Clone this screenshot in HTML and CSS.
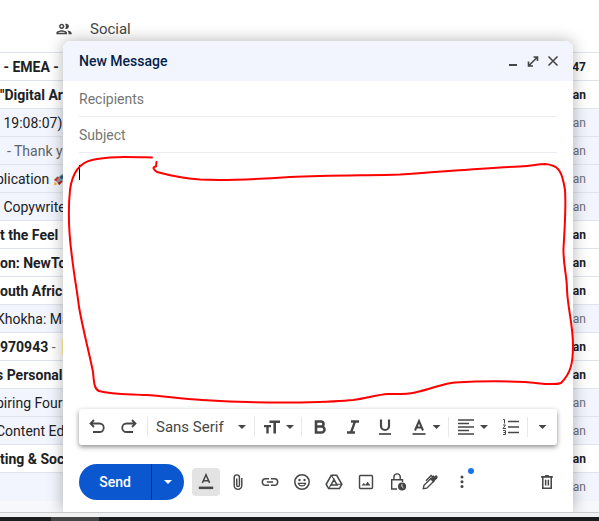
FILE: index.html
```html
<!DOCTYPE html>
<html lang="en">
<head>
<meta charset="utf-8">
<title>New Message</title>
<link rel="stylesheet" href="styles.css">
</head>
<body>
<main class="inbox">
  <div class="tabs">
    <a class="tab" href="#social">
      <svg class="tab-icon" viewBox="1.500 4.500 21 15"><path d="M9 13.750c-2.340 0-7 1.170-7 3.500V19h14v-1.750c0-2.330-4.660-3.500-7-3.500zM4.340 17c.84-.58 2.870-1.250 4.660-1.250s3.820.67 4.660 1.250H4.340zM9 12c1.930 0 3.500-1.570 3.500-3.500S10.930 5 9 5 5.500 6.570 5.500 8.500 7.070 12 9 12zm0-5c.83 0 1.500.67 1.500 1.500S9.830 10 9 10s-1.500-.67-1.500-1.500S8.170 7 9 7zm7.040 6.810c1.160.84 1.960 1.960 1.960 3.440V19h4v-1.750c0-2.020-3.500-3.170-5.960-3.440zM15 12c1.930 0 3.500-1.570 3.500-3.500S16.930 5 15 5c-.54 0-1.040.13-1.500.35.63.89 1 1.980 1 3.150s-.37 2.260-1 3.150c.46.22.96.35 1.500.35z"/></svg>
      <span>Social</span>
    </a>
  </div>
  <table class="mail">
    <tbody>
      <tr class="unread"><td><div class="subject"> - EMEA -</div></td><td class="date">47</td></tr>
      <tr class="unread"><td><div class="subject">"Digital Ar</div></td><td class="date">an</td></tr>
      <tr><td><div class="subject"> 19:08:07)</div></td><td class="date">an</td></tr>
      <tr><td><div class="subject"><span class="snippet">  - Thank y</span></div></td><td class="date">an</td></tr>
      <tr><td><div class="subject clipped">plication <svg class="rocket" viewBox="0 0 16 16"><path d="M1 9 5 5l3 1-4 5z" fill="#d33a2f"/><path d="m7 15 4-4-1-3-5 4z" fill="#b3261e"/><path d="M4 11C6 5 9 2 15 1c-1 6-4 9-10 11z" fill="#8a9ba5"/><circle cx="10" cy="6" r="2" fill="#2d5f7c"/><path d="m1 15 1-4 3 3z" fill="#f4a62a"/></svg></div></td><td class="date">an</td></tr>
      <tr><td><div class="subject"> Copywrite</div></td><td class="date">an</td></tr>
      <tr class="unread"><td><div class="subject">t the Feel</div></td><td class="date">an</td></tr>
      <tr class="unread"><td><div class="subject">on: NewTo</div></td><td class="date">an</td></tr>
      <tr class="unread"><td><div class="subject">outh Afric</div></td><td class="date">an</td></tr>
      <tr><td><div class="subject clipped">Khokha: Ma</div></td><td class="date">an</td></tr>
      <tr class="unread"><td><div class="subject">970943 <span class="snippet">-</span><mark></mark></div></td><td class="date">an</td></tr>
      <tr class="unread"><td><div class="subject clipped">s Personal</div></td><td class="date">an</td></tr>
      <tr><td><div class="subject clipped">piring Four</div></td><td class="date">an</td></tr>
      <tr><td><div class="subject clipped">Content Ed</div></td><td class="date">an</td></tr>
      <tr class="unread"><td><div class="subject">ting &amp; Soc</div></td><td class="date">an</td></tr>
      <tr><td><div class="subject"></div></td><td class="date">an</td></tr>
    </tbody>
  </table>
</main>
<footer class="taskbar"><span class="task"></span></footer>

<form class="compose">
  <header class="compose-head">
    <h1>New Message</h1>
    <button type="button" class="head-btn" aria-label="Minimize"><svg viewBox="0 0 14 14"><path d="M3 11h8"/></svg></button>
    <button type="button" class="head-btn" aria-label="Full screen"><svg viewBox="0 0 14 14"><path d="M7.500 3H11.500v4M11 3.500 3 11.500M2.500 7.500v4.500H7" stroke-width="1.600"/></svg></button>
    <button type="button" class="head-btn" aria-label="Close"><svg viewBox="0 0 14 14"><path d="m2.500 2.500 9 9M11.500 2.500l-9 9" stroke-width="1.600"/></svg></button>
  </header>
  <div class="compose-main">
    <input class="field" type="text" aria-label="Recipients" placeholder="Recipients">
    <input class="field" type="text" aria-label="Subject" placeholder="Subject">
    <div class="editor" role="textbox" aria-label="Message body" contenteditable="true"><span class="caret"></span></div>
    <div class="format">
      <button type="button" class="tool" aria-label="Undo"><svg viewBox="0 0 20 20"><path d="M7 3 3.500 6.500 7 10M4 6.500h8.500a3.700 3.700 0 0 1 0 8.500H6" stroke-width="1.800"/></svg></button>
      <button type="button" class="tool" aria-label="Redo"><svg viewBox="0 0 20 20"><path d="m13 3 3.500 3.500L13 10M16 6.500H7.500a3.700 3.700 0 0 0 0 8.500H14" stroke-width="1.800"/></svg></button>
      <button type="button" class="tool font line">Sans Serif<i class="arrow"></i></button>
      <button type="button" class="tool size line" aria-label="Size"><svg viewBox="0 0 20 20"><path class="solid" d="M7.500 3.500H18V6h-4v10.500h-2.600V6H7.500zM2 8h7v2.300H6.700v6.200H4.300v-6.200H2z"/></svg><i class="arrow"></i></button>
      <button type="button" class="tool bold line" aria-label="Bold"><svg viewBox="0 0 20 20"><path d="M6 4.500h5a2.500 2.500 0 0 1 0 5H6zm0 5h5.500a3 3 0 0 1 0 6H6z" stroke-width="2.600"/></svg></button>
      <button type="button" class="tool" aria-label="Italic"><svg viewBox="0 0 20 20"><path d="M8 4.500h8M4 15.500h8M12 4.500l-4 11" stroke-width="2.300"/></svg></button>
      <button type="button" class="tool" aria-label="Underline"><svg viewBox="0 0 20 20"><path d="M6 2.500v6.500a4 4 0 0 0 8 0V2.500" stroke-width="2.200"/><path d="M4 17h12" stroke-width="1.700"/></svg></button>
      <button type="button" class="tool size" aria-label="Text color"><svg viewBox="0 0 20 20"><path d="M6 13.500 10 4l4 9.500M7.500 10.500h5"/><path d="M3.500 17h13" stroke-width="1.700"/></svg><i class="arrow"></i></button>
      <button type="button" class="tool size line" aria-label="Align"><svg viewBox="0 0 20 20"><path d="M2 3h16M2 6.500h11M2 10h16M2 13.500h11M2 17h16" stroke-width="1.500"/></svg><i class="arrow"></i></button>
      <button type="button" class="tool" aria-label="Numbered list"><svg viewBox="0 0 20 20"><path d="M7 4.500h11M7 10h11M7 15.500h11" stroke-width="1.500"/><path d="M2 2.500h1.500v4M2 8h2.500L2 11.500h3M2 13.500h2.500v4H2M2.500 15.500h2" stroke-width="1"/></svg></button>
      <button type="button" class="tool more line" aria-label="More formatting"><i class="arrow"></i></button>
    </div>
    <div class="actions">
      <div class="send">
        <button type="submit" class="send-main">Send</button>
        <button type="button" class="send-more" aria-label="More send options"><i class="arrow"></i></button>
      </div>
      <button type="button" class="act active" aria-label="Formatting options"><svg viewBox="0 0 20 20"><path d="M6 11 10 2l4 9M7.300 8.500h5.400" stroke-width="1.700"/><path d="M2 16.500h16" stroke-width="2.800"/></svg></button>
      <button type="button" class="act" aria-label="Attach files"><svg viewBox="0 0 20 20"><path d="M14.200 5.500V14a4.200 4.200 0 0 1-8.400 0V5a2.900 2.900 0 0 1 5.800 0v8.500a1.500 1.500 0 0 1-3 0V6" stroke-width="1.600"/></svg></button>
      <button type="button" class="act" aria-label="Insert link"><svg viewBox="0 0 20 20"><path d="M9 6.300H5.200a3.700 3.700 0 0 0 0 7.400H9M11 6.300h3.800a3.700 3.700 0 0 1 0 7.400H11M6.500 10h7" stroke-width="1.700"/></svg></button>
      <button type="button" class="act" aria-label="Insert emoji"><svg viewBox="0 0 20 20"><circle cx="10" cy="10" r="8" stroke-width="1.700"/><circle class="solid" cx="7.200" cy="7.800" r="1.300"/><circle class="solid" cx="12.800" cy="7.800" r="1.300"/><path d="M6 11.500a4.200 4.200 0 0 0 8 0z" stroke-width="1.400"/></svg></button>
      <button type="button" class="act" aria-label="Insert from Drive"><svg viewBox="0 0 20 20"><path d="M7 2.500h6l5.700 10L16 17.300H4L1.300 12.500zM10 7.300l-3.400 6h6.800z" stroke-width="1.700"/><path d="M7 2.500l3 4.800M4 17.300l2.600-4M18.700 12.500h-5.300" stroke-width="1.200"/></svg></button>
      <button type="button" class="act" aria-label="Insert photo"><svg viewBox="0 0 20 20"><rect x="2.800" y="2.800" width="14.400" height="14.400" rx="1" stroke-width="1.600"/><path class="solid" d="m5 14 2.500-3 1.800 2 2.400-3.200 3.300 4.200z"/></svg></button>
      <button type="button" class="act" aria-label="Confidential mode"><svg viewBox="0 0 20 20"><path d="M9 17.800H3V7.500h12V10M5.500 7V4.500a3.500 3.500 0 0 1 7 0V7" stroke-width="1.600"/><circle class="solid" cx="14.500" cy="15" r="4.500"/><path d="M14.300 12.500V15l1.700 1.500" stroke="#fff" stroke-width="1"/></svg></button>
      <button type="button" class="act" aria-label="Insert signature"><svg viewBox="0 0 20 20"><path d="m2.500 17.500.8-3.800L11 6l3.200 3.200-7.800 7.600z" stroke-width="1.500"/><path class="solid" d="m10 6.500 4-4 1.300 1.300 1.300-1.500q2.400.8 1.900 3.200L13.500 10.500z"/><path d="M5.500 8.500 11.300 2.700l2 1.800" stroke-width="1.500"/></svg></button>
      <button type="button" class="act menu" aria-label="More options"><svg viewBox="0 0 20 20"><circle class="solid" cx="10" cy="4.500" r="1.700"/><circle class="solid" cx="10" cy="9.700" r="1.700"/><circle class="solid" cx="10" cy="15" r="1.700"/></svg><span class="dot"></span></button>
      <button type="button" class="act discard" aria-label="Discard draft"><svg viewBox="0 0 20 20"><path d="M3.500 4.300h13M8 3.200h4M5.300 5v12h9.400V5M8.500 7.500v6.500M11.500 7.500v6.500" stroke-width="1.700"/></svg></button>
    </div>
  </div>
</form>

<svg class="markup" viewBox="0 0 599 521" width="599" height="521" aria-hidden="true"><path d="M152 157.500C130 157 108 156 92 160C78 163 72 175 70 190C68 210 69 235 72 257C74 275 77 290 79 307C83 330 89 352 93 372C94 382 94 389 99 391C113 395 130 394 146 395C165 396 180 399 202 400C235 402 265 403 300 402.500C320 402 340 401.500 353 400C367 398 378 394.500 388 394C398 394 406 394.500 415 392.500C432 389 442 383.500 455 382.500C480 381 505 381 525 382C540 383 553 386 561 383C571 373 573 363 573 345C573 325 568 310 567 290C567 275 563 265 563.500 248C565 225 566 205 565 190C562 170 558 165 545 164C538 164 532 166 520 166.500C480 168 440 172 400 174.500C370 175.500 330 175 290 177C260 179 230 181 200 179.500C180 178 168 175 157 172C152 168 153 167 156 166.500L156.500 162"/></svg>
</body>
</html>
```
FILE: styles.css
```css
* { box-sizing: border-box; }

body {
  margin: 0;
  min-height: 100vh;
  display: flex;
  flex-direction: column;
  overflow: hidden;
  position: relative;
  background: #f6f8fc;
  color: #202124;
  font: 14px/20px Roboto, "Liberation Sans", sans-serif;
}

button, input { font: inherit; border: 0; padding: 0; margin: 0; background: none; color: inherit; }

.inbox { flex: 1; }

.tabs { height: 52px; background: #fff; padding: 19px 56px; }
.tab { display: inline-flex; align-items: center; gap: 18px; color: #444746; text-decoration: none; font-size: 15px; }
.tab-icon { width: 16px; height: 12px; fill: #444746; }

.mail { width: 100%; border-collapse: collapse; table-layout: fixed; }
.mail tr { height: 28px; background: #f2f5fd; border-top: 1px solid #dfe4ec; }
.mail td { padding: 0; }
.mail .unread { background: #fff; font-weight: 700; }
.subject { width: 68px; height: 20px; display: flex; white-space: pre; }
.clipped { margin-left: -4px; }
.snippet { color: #5f6368; font-weight: 400; }
.mail mark { background: #fff59d; width: 6px; height: 16px; margin-left: auto; align-self: center; }
.rocket { width: 14px; height: 14px; flex: none; align-self: center; }
.mail .date { padding-right: 13px; text-align: right; font-size: 12px; color: #6b6f76; }
.mail .unread .date { color: #202124; }

.taskbar { height: 8px; background: #1b1c1d; border-top: 4px solid #f2f2f2; box-shadow: 0 -1px #c9cbce; padding-left: 51px; display: flex; }
.task { width: 48px; height: 4px; background: #444; }

.compose {
  position: absolute;
  top: 41px;
  left: 63px;
  right: 26px;
  bottom: 9px;
  display: flex;
  flex-direction: column;
  background: #fff;
  border-radius: 8px 8px 0 0;
  box-shadow: 0 0 16px rgba(0, 0, 0, .3);
  clip-path: inset(-20px -20px 0 -20px);
}
.compose-head { height: 40px; padding: 0 13px 0 16px; display: flex; align-items: center; gap: 6px; background: #f2f5fd; border-radius: 8px 8px 0 0; }
.compose-head h1 { flex: 1; margin: 0; font-size: 14px; font-weight: 500; color: #041e49; }
.head-btn { width: 14px; height: 14px; }
.head-btn svg { display: block; fill: none; stroke: #444746; stroke-width: 2; }

.compose-main { flex: 1; display: flex; flex-direction: column; padding: 0 16px; }
.field { width: 100%; height: 36px; border-bottom: 1px solid #e8ecf0; border-radius: 0; outline: 0; }
.field::placeholder { color: #747775; opacity: 1; }
.editor { flex: 1; padding-top: 12px; outline: 0; }
.caret { display: block; width: 1px; height: 15px; background: #000; }

.format { height: 36px; display: flex; align-items: center; padding-left: 2px; border-radius: 3px; background: #fff; box-shadow: 0 2px 5px rgba(0, 0, 0, .45); }
.tool { width: 32px; height: 20px; display: flex; align-items: center; justify-content: center; gap: 4px; color: #444746; }
.tool svg, .act svg { width: 18px; height: 18px; flex: none; fill: none; stroke: #444746; stroke-width: 2; }
.tool svg { width: 20px; height: 20px; }
svg .solid { fill: #444746; stroke: none; }
.line { border-left: 1px solid #e6e8eb; }
.font { width: 107px; margin-left: 2px; justify-content: space-between; padding: 0 8px; font-size: 15px; }
.size { width: 47px; }
.bold { width: 36px; }
.more { flex: 1; }
.arrow { width: 8px; height: 4px; background: currentColor; clip-path: polygon(0 0, 100% 0, 50% 100%); }

.actions { display: flex; align-items: center; padding: 19px 0 12px; }
.send { display: flex; height: 36px; margin-right: 8px; border-radius: 18px; overflow: hidden; background: #0b57d0; color: #fff; }
.send-main { width: 72px; font-weight: 500; }
.send-more { width: 33px; display: flex; align-items: center; justify-content: center; border-left: 1px solid #062e6f; }
.act { width: 28px; height: 28px; margin-right: 4px; display: flex; align-items: center; justify-content: center; border-radius: 4px; position: relative; }
.active { background: #e3e3e3; }
.dot { position: absolute; top: 0; right: 2px; width: 6px; height: 6px; border-radius: 50%; background: #1a73e8; }
.discard { margin-left: auto; margin-right: -4px; }

.markup { position: absolute; top: 0; left: 0; pointer-events: none; fill: none; stroke: #f00; stroke-width: 2; stroke-linecap: round; stroke-linejoin: round; }
```
